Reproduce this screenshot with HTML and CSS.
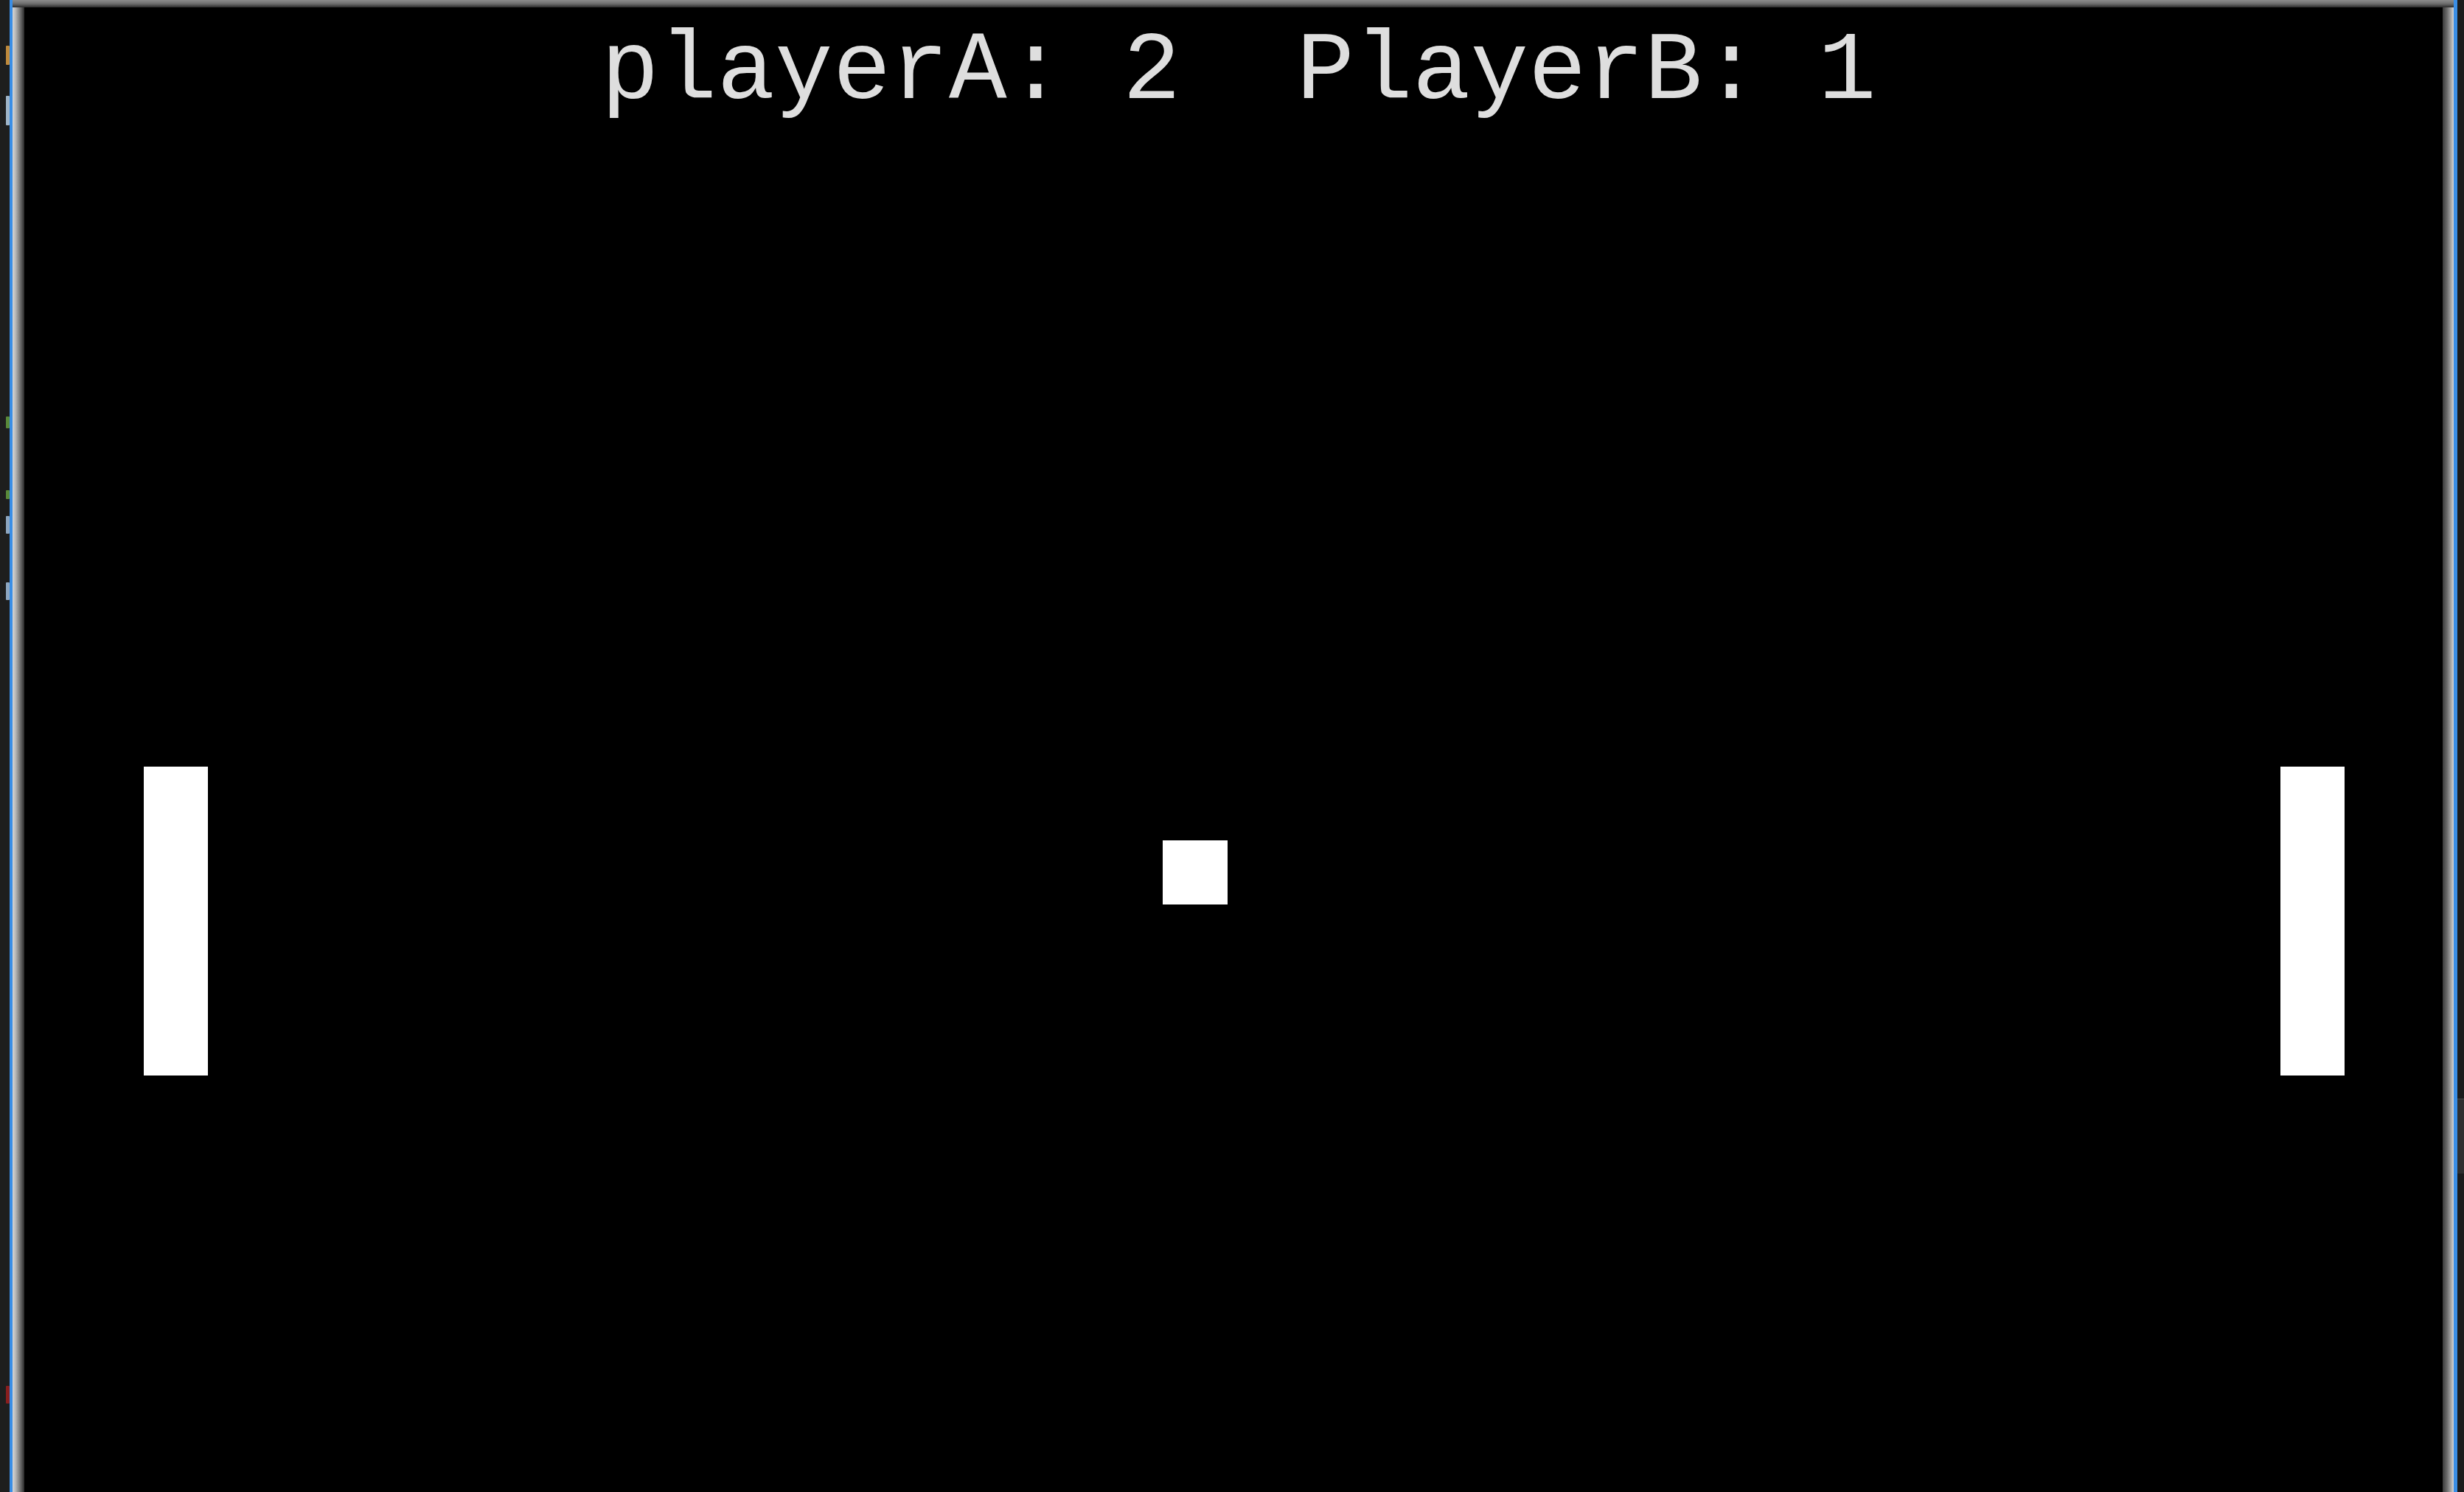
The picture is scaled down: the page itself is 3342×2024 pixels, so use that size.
FILE: index.html
```html
<!DOCTYPE html>
<html lang="en">
<head>
<meta charset="utf-8">
<title>Pong</title>
<link rel="stylesheet" href="styles.css">
</head>
<body>
<div class="screen">
  <div class="editor-left">
    <span class="mark m1"></span>
    <span class="mark m2"></span>
    <span class="mark m3"></span>
    <span class="mark m4"></span>
    <span class="mark m5"></span>
    <span class="mark m6"></span>
    <span class="mark m7"></span>
  </div>
  <div class="accent accent-left"></div>
  <div class="window">
    <div class="frame-top"></div>
    <div class="window-body">
      <div class="frame-left"></div>
      <div class="canvas">
        <div class="score">playerA: 2  PlayerB: 1</div>
        <div class="paddle paddle-a"></div>
        <div class="paddle paddle-b"></div>
        <div class="ball"></div>
      </div>
      <div class="frame-right"></div>
    </div>
  </div>
  <div class="accent accent-right"></div>
  <div class="editor-right">
    <div class="panel"></div>
  </div>
</div>
</body>
</html>
```
FILE: styles.css
```css
html, body {
  margin: 0;
  padding: 0;
  background: #1e1e1e;
  overflow: hidden;
}

.screen {
  display: flex;
  width: 3342px;
  height: 2024px;
}

.editor-left {
  width: 13px;
  background: #1e1e1e;
  position: relative;
}

.mark {
  position: absolute;
  right: 0;
  width: 5px;
  height: 20px;
  border-radius: 1px;
}
.m1 { top: 62px; background: #c08a3c; height: 26px; }
.m2 { top: 130px; background: #9fb4c8; height: 40px; }
.m3 { top: 565px; background: #5a8a3a; height: 16px; }
.m4 { top: 665px; background: #5a8a3a; height: 12px; }
.m5 { top: 700px; background: #8ea6c0; height: 24px; }
.m6 { top: 790px; background: #8ea6c0; height: 24px; }
.m7 { top: 1880px; background: #8a1e1e; height: 24px; }

.accent {
  background: #3a8ee6;
}
.accent-left { width: 4px; }
.accent-right { width: 5px; }

.window {
  flex: 1;
  display: flex;
  flex-direction: column;
}

.frame-top {
  height: 10px;
  background: linear-gradient(to bottom, #8c8c8c 0%, #6e6e6e 50%, #2c2c2c 100%);
}

.window-body {
  flex: 1;
  display: flex;
}

.frame-left {
  width: 16px;
  background: linear-gradient(to right, #d6d6d6 0%, #b8b8b8 25%, #7a7a7a 60%, #2a2a2a 100%);
}

.frame-right {
  width: 15px;
  background: linear-gradient(to right, #3a3a3a 0%, #6c6c6c 40%, #a6a6a6 75%, #d6d6d6 100%);
}

.canvas {
  flex: 1;
  background: #000;
  position: relative;
}

.score {
  padding-top: 23px;
  padding-left: 14px;
  text-align: center;
  white-space: pre;
  font-family: "Liberation Mono", "Courier New", monospace;
  font-size: 131px;
  line-height: 131px;
  color: #dedede;
}

.paddle {
  position: absolute;
  top: 1030px;
  width: 87px;
  height: 419px;
  background: #fff;
}
.paddle-a { left: 162px; }
.paddle-b { left: 3060px; }

.ball {
  position: absolute;
  left: 1544px;
  top: 1130px;
  width: 88px;
  height: 87px;
  background: #fff;
}

.editor-right {
  width: 9px;
  background: #1b1b1b;
  display: flex;
  flex-direction: column;
  justify-content: flex-start;
}

.panel {
  margin-top: 1490px;
  height: 100px;
  background: #2e2e2e;
  border-top: 2px solid #3a3a3a;
}
```
